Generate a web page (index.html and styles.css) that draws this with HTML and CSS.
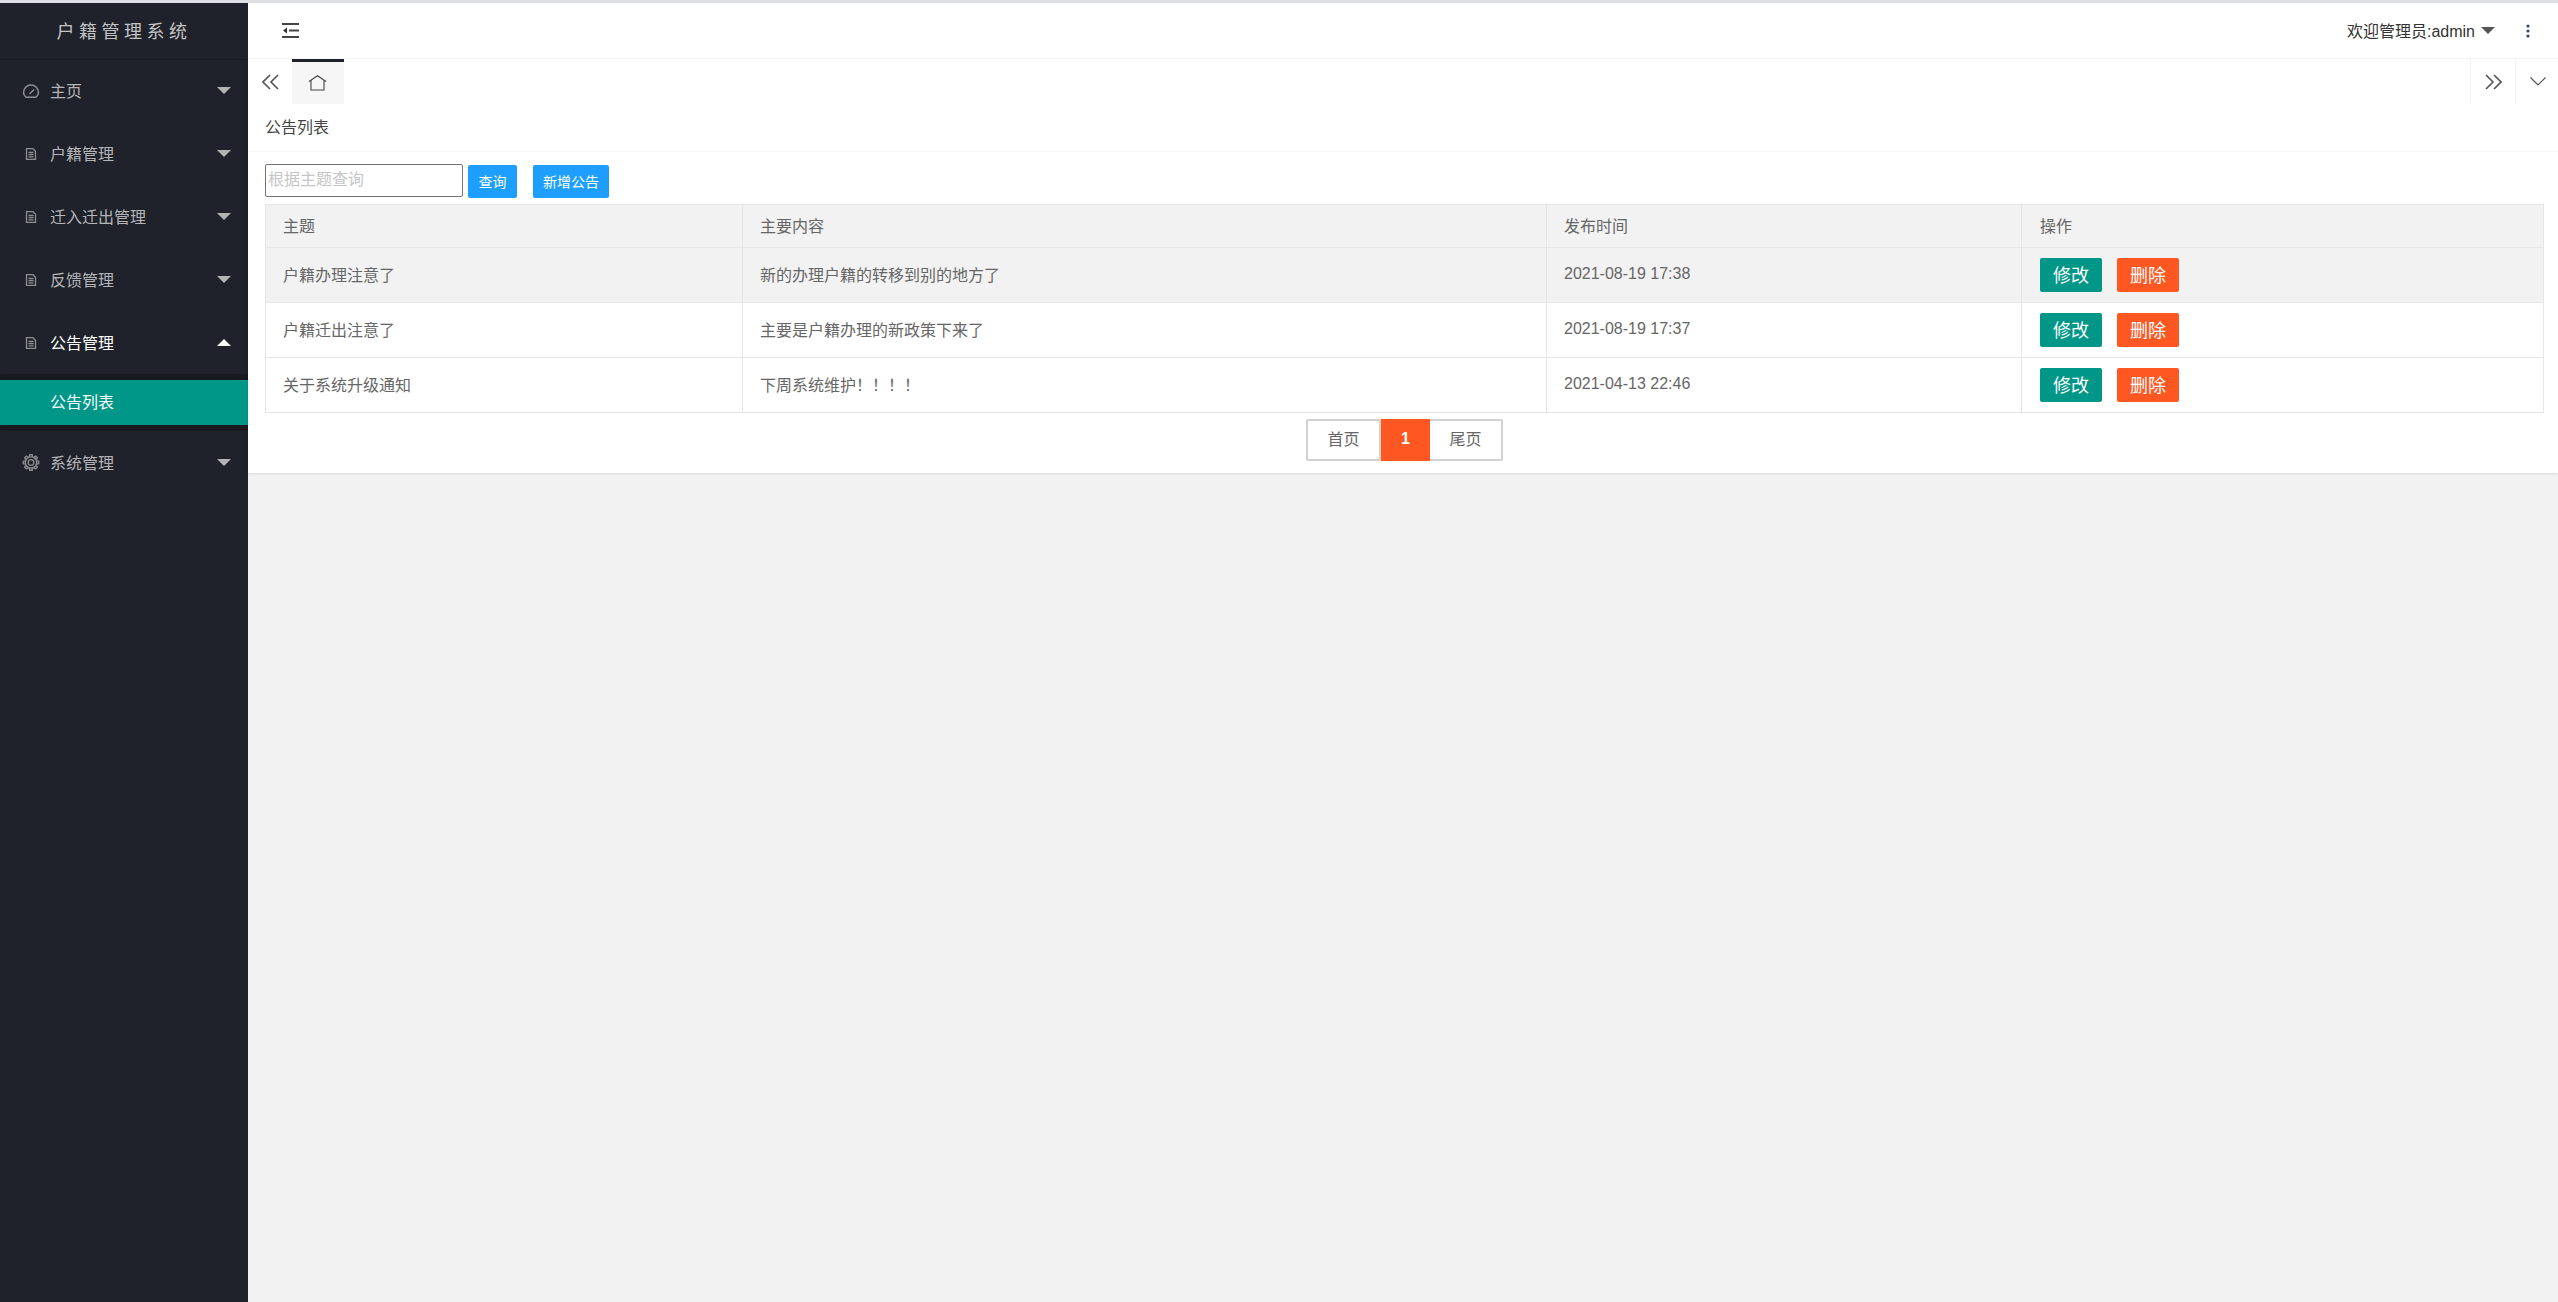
FILE: index.html
```html
<!DOCTYPE html>
<html lang="zh-CN">
<head>
	<meta charset="UTF-8">
	<title>户籍管理系统</title>
	<link rel="stylesheet" href="styles.css">
</head>
<body>
	<div class="app">
		<!-- sidebar -->
		<div class="side">
			<div class="logo">户籍管理系统</div>
			<div class="nav-item">
				<svg class="nav-icon" width="17" height="14" viewBox="0 0 17 14"><path d="M3.500 13.200H13.500C15 12 16 10.400 16 8.500A7.500 7.500 0 0 0 1 8.500C1 10.400 2 12 3.500 13.200Z" fill="none" stroke="currentColor" stroke-width="1.500"/><path d="M7 10L11.500 5.500" stroke="currentColor" stroke-width="1.500"/></svg>
				<span class="nav-text">主页</span><i class="caret"></i>
			</div>
			<div class="nav-item">
				<svg class="nav-icon" width="12" height="12" viewBox="0 0 12 12"><path d="M1.5 .7H8L10.5 3.2V11.3H1.5Z M3.5 4.5H8.5 M3.5 6.6H8.5 M3.5 8.8H8.5" fill="none" stroke="currentColor" stroke-width="1.3"/></svg>
				<span class="nav-text">户籍管理</span><i class="caret"></i>
			</div>
			<div class="nav-item">
				<svg class="nav-icon" width="12" height="12" viewBox="0 0 12 12"><path d="M1.5 .7H8L10.5 3.2V11.3H1.5Z M3.5 4.5H8.5 M3.5 6.6H8.5 M3.5 8.8H8.5" fill="none" stroke="currentColor" stroke-width="1.3"/></svg>
				<span class="nav-text">迁入迁出管理</span><i class="caret"></i>
			</div>
			<div class="nav-item">
				<svg class="nav-icon" width="12" height="12" viewBox="0 0 12 12"><path d="M1.5 .7H8L10.5 3.2V11.3H1.5Z M3.5 4.5H8.5 M3.5 6.6H8.5 M3.5 8.8H8.5" fill="none" stroke="currentColor" stroke-width="1.3"/></svg>
				<span class="nav-text">反馈管理</span><i class="caret"></i>
			</div>
			<div class="nav-item nav-open">
				<svg class="nav-icon" width="12" height="12" viewBox="0 0 12 12"><path d="M1.5 .7H8L10.5 3.2V11.3H1.5Z M3.5 4.5H8.5 M3.5 6.6H8.5 M3.5 8.8H8.5" fill="none" stroke="currentColor" stroke-width="1.3"/></svg>
				<span class="nav-text">公告管理</span><i class="caret caret-up"></i>
			</div>
			<div class="nav-child">
				<div class="nav-child-item">公告列表</div>
			</div>
			<div class="nav-item">
				<svg class="nav-icon" width="18" height="17" viewBox="0 0 18 18">
					<g fill="none" stroke="currentColor" stroke-width="1.4">
						<circle cx="9" cy="9" r="6"/>
						<circle cx="9" cy="9" r="3"/>
						<path d="M7.300 3L7.700 .8H10.300L10.700 3"/>
						<path d="M7.300 3L7.700 .8H10.300L10.700 3" transform="rotate(45 9 9)"/>
						<path d="M7.300 3L7.700 .8H10.300L10.700 3" transform="rotate(90 9 9)"/>
						<path d="M7.300 3L7.700 .8H10.300L10.700 3" transform="rotate(135 9 9)"/>
						<path d="M7.300 3L7.700 .8H10.300L10.700 3" transform="rotate(180 9 9)"/>
						<path d="M7.300 3L7.700 .8H10.300L10.700 3" transform="rotate(225 9 9)"/>
						<path d="M7.300 3L7.700 .8H10.300L10.700 3" transform="rotate(270 9 9)"/>
						<path d="M7.300 3L7.700 .8H10.300L10.700 3" transform="rotate(315 9 9)"/>
					</g>
				</svg>
				<span class="nav-text">系统管理</span><i class="caret"></i>
			</div>
		</div>

		<div class="main">
			<!-- top bar -->
			<div class="head">
				<svg class="shrink-icon" width="17" height="15" viewBox="0 0 17 15"><path d="M0 1H17 M7 7.500H17 M0 14H17" stroke="#444" stroke-width="2"/><path d="M1 7.500L5 4.500V10.500Z" fill="#333"/></svg>
				<div class="head-right">
					<span class="user">欢迎管理员:admin</span><i class="caret caret-dark"></i>
					<svg class="dots" width="4" height="14" viewBox="0 0 4 14"><circle cx="2" cy="2" r="1.6" fill="#2f4a66"/><circle cx="2" cy="7" r="1.6" fill="#2f4a66"/><circle cx="2" cy="12" r="1.6" fill="#2f4a66"/></svg>
				</div>
			</div>

			<!-- tabs -->
			<div class="tabs">
				<div class="tab-btn tab-prev">
					<svg width="17" height="16" viewBox="0 0 17 16"><path d="M8 1L1 8L8 15 M16 1L9 8L16 15" fill="none" stroke="#555" stroke-width="1.6"/></svg>
				</div>
				<div class="tab-home">
					<svg width="20" height="16" viewBox="0 0 20 16"><path d="M1 6.500L9.500 .7L18 6.500 M3 5.500V15H16V5.500" fill="none" stroke="#444" stroke-width="1.100"/></svg>
				</div>
				<div class="tab-space"></div>
				<div class="tab-btn tab-next">
					<svg width="17" height="16" viewBox="0 0 17 16"><path d="M1 1L8 8L1 15 M9 1L16 8L9 15" fill="none" stroke="#555" stroke-width="1.6"/></svg>
				</div>
				<div class="tab-btn tab-down">
					<svg width="16" height="9" viewBox="0 0 16 9"><path d="M.5 .5L8 8L15.500 .5" fill="none" stroke="#555" stroke-width="1.200"/></svg>
				</div>
			</div>

			<div class="content">
				<div class="card">
					<div class="card-header">公告列表</div>
					<div class="toolbar">
						<input class="search" type="text" placeholder="根据主题查询">
						<button class="btn-blue btn-query">查询</button>
						<button class="btn-blue btn-add">新增公告</button>
					</div>
					<div class="table-wrap">
						<table class="list">
							<colgroup>
								<col class="col-title">
								<col class="col-body">
								<col class="col-time">
								<col>
							</colgroup>
							<thead>
								<tr>
									<th>主题</th>
									<th>主要内容</th>
									<th>发布时间</th>
									<th class="cell-action">操作</th>
								</tr>
							</thead>
							<tbody>
								<tr class="row-hover">
									<td>户籍办理注意了</td>
									<td>新的办理户籍的转移到别的地方了</td>
									<td>2021-08-19 17:38</td>
									<td class="cell-action"><button class="btn-edit">修改</button><button class="btn-del">删除</button></td>
								</tr>
								<tr>
									<td>户籍迁出注意了</td>
									<td>主要是户籍办理的新政策下来了</td>
									<td>2021-08-19 17:37</td>
									<td class="cell-action"><button class="btn-edit">修改</button><button class="btn-del">删除</button></td>
								</tr>
								<tr>
									<td>关于系统升级通知</td>
									<td>下周系统维护！！！！</td>
									<td>2021-04-13 22:46</td>
									<td class="cell-action"><button class="btn-edit">修改</button><button class="btn-del">删除</button></td>
								</tr>
							</tbody>
						</table>
					</div>
					<div class="pager">
						<a class="page page-first">首页</a>
						<a class="page page-cur">1</a>
						<a class="page page-last">尾页</a>
					</div>
				</div>
			</div>
		</div>
	</div>
</body>
</html>
```

FILE: styles.css
```css
* {
	box-sizing: border-box;
}

html, body {
	height: 100%;
}

body {
	margin: 0;
	border-top: 3px solid #dfdfe6;
	background: #f2f2f2;
	font-family: "Liberation Sans", "Noto Sans CJK SC", sans-serif;
	font-size: 16px;
	color: #666;
}

.app {
	display: flex;
	height: 100%;
}

/* sidebar */
.side {
	width: 248px;
	flex-shrink: 0;
	background: #1f222a;
	color: #b4b4b6;
}

.logo {
	height: 56px;
	display: flex;
	align-items: center;
	justify-content: center;
	padding-bottom: 2px;
	font-size: 18px;
	letter-spacing: 4.500px;
	color: #c4c4c6;
	box-shadow: 0 1px 1px rgba(0,0,0,0.12);
}

.nav-item {
	height: 63px;
	display: flex;
	align-items: center;
	position: relative;
	padding-right: 17px;
}

.nav-icon {
	position: absolute;
	left: 30.500px;
	transform: translateX(-50%);
	color: #8e8f93;
}

.nav-text {
	margin-left: 50px;
	padding-bottom: 2px;
	flex: 1;
}

.nav-open .nav-text {
	color: #fff;
}

.caret {
	display: inline-block;
	width: 0;
	height: 0;
	border-left: 7px solid transparent;
	border-right: 7px solid transparent;
	border-top: 7px solid #b4b4b6;
}

.caret-up {
	border-top: 0;
	border-bottom: 7px solid #fff;
}

.caret-dark {
	border-top-color: #555;
	margin-left: 6px;
}

.nav-child {
	padding: 6px 0;
	background: #181a20;
	border-radius: 2px;
}

.nav-child-item {
	height: 45px;
	line-height: 45px;
	padding-left: 50px;
	background: #009688;
	color: #fff;
}

/* main area */
.main {
	flex: 1;
	display: flex;
	flex-direction: column;
}

.head {
	height: 56px;
	background: #fff;
	display: flex;
	align-items: center;
	justify-content: space-between;
	padding: 0 28px 0 34px;
	border-bottom: 1px solid #f6f6f6;
	color: #333;
}

.head-right {
	display: flex;
	align-items: center;
}

.user {
	padding-bottom: 2px;
}

.dots {
	margin-left: 31px;
}

.tabs {
	height: 45px;
	background: #fff;
	display: flex;
	box-shadow: 0 1px 2px rgba(0,0,0,0.1);
}

.tab-btn {
	display: flex;
	align-items: center;
	justify-content: center;
}

.tab-prev {
	width: 44px;
}

.tab-home {
	width: 52px;
	background: #f6f6f6;
	border-top: 3px solid #20222a;
	display: flex;
	align-items: center;
	justify-content: center;
}

.tab-space {
	flex: 1;
}

.tab-next, .tab-down {
	width: 45px;
	border-left: 1px solid #f2f2f2;
}

.tab-down {
	width: 43px;
	padding-left: 2px;
}

.content {
	flex: 1;
}

.card {
	background: #fff;
	height: 369px;
	box-shadow: 0 1px 2px rgba(0,0,0,0.1);
}

.card-header {
	height: 48px;
	line-height: 47px;
	padding-left: 17px;
	border-bottom: 1px solid #f6f6f6;
	color: #444;
}

.toolbar {
	height: 52px;
	padding: 12px 0 0 17px;
	display: flex;
	align-items: flex-start;
}

.search {
	width: 198px;
	height: 33px;
	border: 1px solid #767676;
	border-radius: 2px;
	padding: 0 2px 2px;
	font: inherit;
	outline: none;
}

.search::placeholder {
	color: #c6c6c6;
}

.btn-blue {
	height: 33px;
	margin-top: 1px;
	padding: 0 0 2px;
	border: 0;
	border-radius: 2px;
	background: #1e9fff;
	color: #fff;
	font: inherit;
	font-size: 14px;
}

.btn-query {
	width: 49px;
	margin-left: 5px;
}

.btn-add {
	width: 76px;
	margin-left: 16px;
}

.table-wrap {
	padding: 0 14px 0 17px;
}

.list {
	width: 100%;
	table-layout: fixed;
	border-collapse: collapse;
}

.col-title {
	width: 477px;
}

.col-body {
	width: 804px;
}

.col-time {
	width: 475px;
}

.list th, .list td {
	border: 1px solid #e6e6e6;
	padding: 0 17px 2px;
	text-align: left;
	font-weight: 400;
}

.list th {
	height: 43px;
	background: #f2f2f2;
}

.list td {
	height: 55px;
}

.list .cell-action {
	padding-left: 18px;
}

.list td.cell-action {
	padding-bottom: 0;
}

.row-hover td {
	background: #f2f2f2;
}

.btn-edit, .btn-del {
	width: 62px;
	height: 34px;
	padding: 0 0 2px;
	border: 0;
	border-radius: 2px;
	color: #fff;
	font: inherit;
	font-size: 18px;
	vertical-align: middle;
}

.btn-edit {
	background: #009688;
}

.btn-del {
	background: #ff5722;
	margin-left: 15px;
}

.pager {
	display: flex;
	justify-content: center;
	margin-top: 6px;
	padding-left: 3px;
}

.page {
	height: 42px;
	line-height: 38px;
	text-align: center;
	border: 2px solid #d2d2d2;
	border-left-width: 0;
}

.page-first {
	width: 75px;
	border-left-width: 2px;
	border-radius: 2px 0 0 2px;
}

.page-cur {
	width: 49px;
	background: #ff5722;
	border: 0;
	line-height: 40px;
	color: #fff;
	font-weight: 700;
}

.page-last {
	width: 73px;
	border-radius: 0 2px 2px 0;
}
```
